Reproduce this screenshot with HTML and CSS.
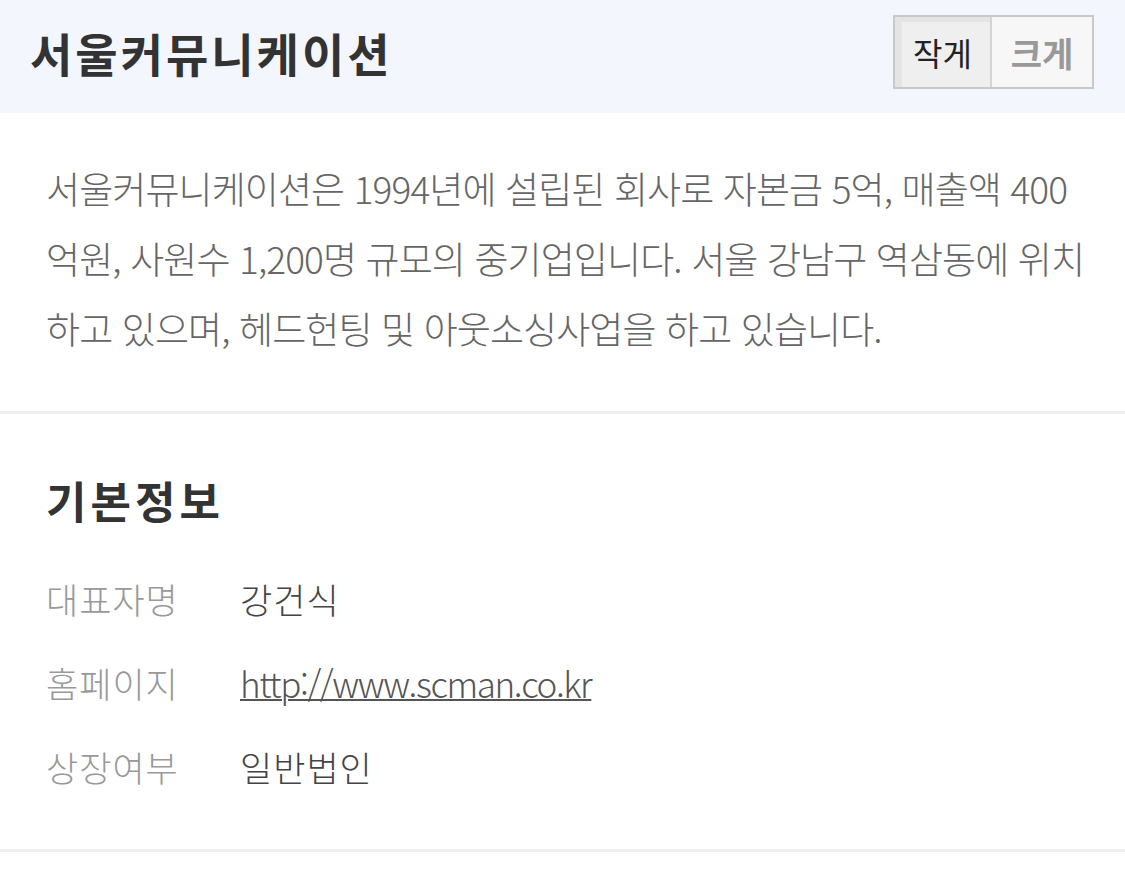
FILE: index.html
```html
<!DOCTYPE html>
<html lang="ko">
<head>
    <meta charset="UTF-8">
    <meta name="viewport" content="width=device-width, initial-scale=1.0">
    <title>서울커뮤니케이션</title>
    <link rel="stylesheet" href="styles.css">
</head>
<body>
    <header class="top">
        <h1>서울커뮤니케이션</h1>
        <div class="size-btns">
            <button class="btn-small">작게</button>
            <button class="btn-large">크게</button>
        </div>
    </header>

    <section class="intro">
        <p>서울커뮤니케이션은 1994년에 설립된 회사로 자본금 5억, 매출액 400억원, 사원수 1,200명 규모의 중기업입니다. 서울 강남구 역삼동에 위치하고 있으며, 헤드헌팅 및 아웃소싱사업을 하고 있습니다.</p>
    </section>

    <section class="info">
        <h2>기본정보</h2>
        <dl>
            <div class="row">
                <dt>대표자명</dt>
                <dd>강건식</dd>
            </div>
            <div class="row">
                <dt>홈페이지</dt>
                <dd><a href="#">http://www.scman.co.kr</a></dd>
            </div>
            <div class="row">
                <dt>상장여부</dt>
                <dd>일반법인</dd>
            </div>
        </dl>
    </section>
</body>
</html>
```

FILE: styles.css
```css
body {
    margin: 0;
    font-family: "Noto Sans CJK KR", "Noto Sans", sans-serif;
    background: #fff;
    color: #333;
}
.top {
    display: flex;
    justify-content: space-between;
    align-items: center;
    height: 104px;
    padding: 0 31px 9px 30px;
    background-color: #f3f6fd;
}
.top h1 {
    margin: 0;
    font-size: 46px;
    line-height: 60px;
    font-weight: 700;
    letter-spacing: 3px;
    color: #333;
}
.size-btns {
    display: flex;
    border: 2px solid #c8c8c8;
}
.size-btns button {
    height: 70px;
    border: none;
    font-family: inherit;
    padding: 0;
    cursor: pointer;
}
.btn-small {
    width: 97px;
    background-color: #efefef;
    color: #222;
    font-size: 32px;
    border-right: 2px solid #d4d4d4 !important;
    box-shadow: inset 7px 5px 0 #e4e4e4;
}
.btn-large {
    width: 100px;
    background-color: #f7f7f7;
    color: #999;
    font-size: 34px;
    font-weight: 700;
}
.intro {
    padding: 40px 30px 48px 46px;
    border-bottom: 3px solid #eee;
}
.intro p {
    margin: 0;
    font-size: 37px;
    line-height: 70px;
    letter-spacing: -0.9px;
    color: #666;
    font-weight: 300;
}
.info {
    padding: 56px 46px 41px;
    border-bottom: 3px solid #eee;
}
.info h2 {
    margin: 0 0 26px;
    font-size: 44px;
    line-height: 60px;
    font-weight: 700;
    letter-spacing: 4px;
    color: #333;
}
dl {
    margin: 0;
}
.row {
    display: flex;
    align-items: center;
    height: 84px;
}
dt {
    width: 194px;
    font-size: 35px;
    letter-spacing: 1px;
    color: #999;
    font-weight: 300;
}
dd {
    margin: 0;
    font-size: 35px;
    letter-spacing: 1px;
    color: #444;
    font-weight: 300;
}
dd a {
    color: #555;
    letter-spacing: -1.4px;
    text-decoration: underline;
    text-decoration-thickness: 2px;
}
```
